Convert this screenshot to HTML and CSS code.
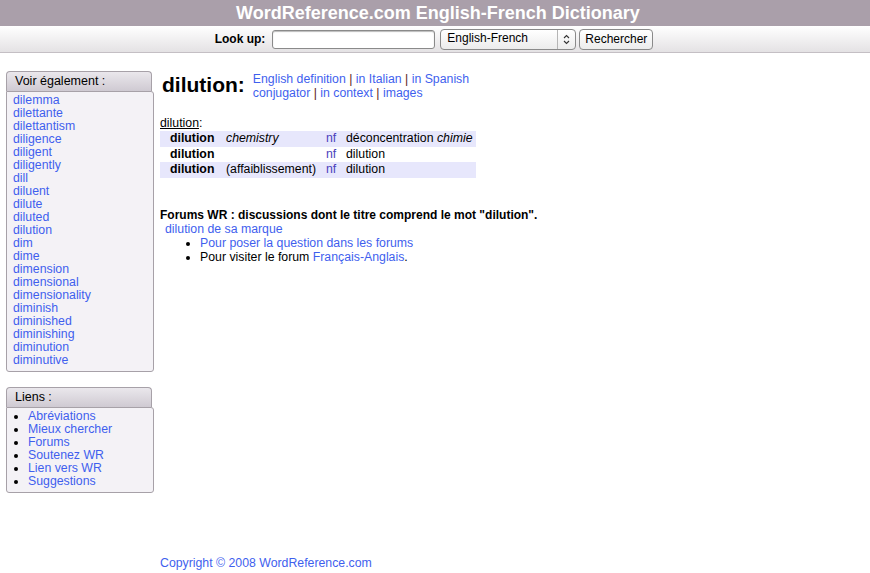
FILE: index.html
```html
<!DOCTYPE html>
<html lang="fr">
<head>
    <meta charset="UTF-8">
    <title>dilution - English-French Dictionary WordReference.com</title>
    <link rel="stylesheet" href="styles.css">
</head>
<body>
    <div class="title-bar">WordReference.com English-French Dictionary</div>

    <form class="search-bar">
        <label for="query">Look up:</label>
        <input type="text" id="query" class="search-input">
        <div class="select-box">
            <span>English-French</span>
            <span class="stepper">
                <svg width="7" height="11" viewBox="0 0 7 11"><path d="M1 4 L3.5 1.5 L6 4 M1 7 L3.5 9.5 L6 7" fill="none" stroke="#333" stroke-width="1.1"/></svg>
            </span>
        </div>
        <button type="button" class="search-button">Rechercher</button>
    </form>

    <div class="page">
        <div class="sidebar">
            <div class="side-box">
                <div class="side-head">Voir également :</div>
                <div class="side-body">
                    <a href="#">dilemma</a>
                    <a href="#">dilettante</a>
                    <a href="#">dilettantism</a>
                    <a href="#">diligence</a>
                    <a href="#">diligent</a>
                    <a href="#">diligently</a>
                    <a href="#">dill</a>
                    <a href="#">diluent</a>
                    <a href="#">dilute</a>
                    <a href="#">diluted</a>
                    <a href="#">dilution</a>
                    <a href="#">dim</a>
                    <a href="#">dime</a>
                    <a href="#">dimension</a>
                    <a href="#">dimensional</a>
                    <a href="#">dimensionality</a>
                    <a href="#">diminish</a>
                    <a href="#">diminished</a>
                    <a href="#">diminishing</a>
                    <a href="#">diminution</a>
                    <a href="#">diminutive</a>
                </div>
            </div>

            <div class="side-box">
                <div class="side-head">Liens :</div>
                <ul class="side-body side-list">
                    <li><a href="#">Abréviations</a></li>
                    <li><a href="#">Mieux chercher</a></li>
                    <li><a href="#">Forums</a></li>
                    <li><a href="#">Soutenez WR</a></li>
                    <li><a href="#">Lien vers WR</a></li>
                    <li><a href="#">Suggestions</a></li>
                </ul>
            </div>
        </div>

        <div class="main">
            <div class="word-head">
                <h1>dilution:</h1>
                <div class="other-links">
                    <a href="#">English definition</a> | <a href="#">in Italian</a> | <a href="#">in Spanish</a><br>
                    <a href="#">conjugator</a> | <a href="#">in context</a> | <a href="#">images</a>
                </div>
            </div>

            <div class="entry-title"><u>dilution</u>:</div>
            <table class="entries">
                <tr class="even">
                    <td class="from">dilution</td>
                    <td class="note"><i>chemistry</i></td>
                    <td class="pos">nf</td>
                    <td>déconcentration <i>chimie</i></td>
                </tr>
                <tr>
                    <td class="from">dilution</td>
                    <td class="note"></td>
                    <td class="pos">nf</td>
                    <td>dilution</td>
                </tr>
                <tr class="even">
                    <td class="from">dilution</td>
                    <td class="note">(affaiblissement)</td>
                    <td class="pos">nf</td>
                    <td>dilution</td>
                </tr>
            </table>

            <div class="forums">
                <b>Forums WR : discussions dont le titre comprend le mot "dilution".</b>
                <div class="thread"><a href="#">dilution de sa marque</a></div>
                <ul>
                    <li><a href="#">Pour poser la question dans les forums</a></li>
                    <li>Pour visiter le forum <a href="#">Français-Anglais</a>.</li>
                </ul>
            </div>
        </div>
    </div>

    <div class="footer"><a href="#">Copyright © 2008 WordReference.com</a></div>
</body>
</html>
```

FILE: styles.css
```css
body {
    margin: 0;
    font-family: "Liberation Sans", Arial, sans-serif;
    font-size: 12.3px;
    color: #000;
}
a {
    color: #3f5fee;
    text-decoration: none;
}
.title-bar {
    height: 26px;
    padding-left: 6px;
    line-height: 26px;
    background-color: #aa9faa;
    color: #fff;
    font-size: 18px;
    font-weight: bold;
    text-align: center;
}
.search-bar {
    display: flex;
    justify-content: center;
    align-items: center;
    height: 26px;
    margin: 0;
    padding-right: 2px;
    background: linear-gradient(#ffffff, #e4e2e4);
    border-bottom: 1px solid #c4bfc4;
    font-size: 12px;
}
.search-bar label {
    font-weight: bold;
    margin-right: 7px;
}
.search-input {
    width: 157px;
    height: 15px;
    margin: 0 5px 0 0;
    padding: 1px 2px;
    border: 1px solid #8a8a8a;
    border-radius: 3px;
    box-shadow: inset 0 1px 1px #bbb;
}
.select-box {
    display: flex;
    align-items: center;
    justify-content: space-between;
    box-sizing: border-box;
    width: 136px;
    height: 21px;
    margin-right: 3px;
    padding-left: 6px;
    border: 1px solid #8a8a8a;
    border-radius: 4px;
    background: linear-gradient(#ffffff, #ececec);
    font-size: 12px;
}
.select-box span {
    margin-top: -3px;
}
.stepper {
    display: flex;
    align-items: center;
    justify-content: center;
    width: 17px;
    height: 19px;
    margin-top: 0 !important;
    border-left: 1px solid #b5b5b5;
}
.search-button {
    height: 21px;
    padding: 0 5px;
    border: 1px solid #8a8a8a;
    border-radius: 4px;
    background: linear-gradient(#ffffff, #ececec);
    font-family: "Liberation Sans", Arial, sans-serif;
    font-size: 12px;
}
.page {
    display: flex;
    padding: 18px 0 0 6px;
}
.sidebar {
    width: 149px;
    flex-shrink: 0;
}
.side-box {
    margin-bottom: 15px;
}
.side-head {
    width: 136px;
    height: 19px;
    line-height: 19px;
    padding-left: 8px;
    border: 1px solid #a7a1a8;
    border-bottom: none;
    border-radius: 4px 4px 0 0;
    background: linear-gradient(#eae7ec, #cfcad2);
    font-size: 12.5px;
}
.side-body {
    width: 140px;
    margin: 0;
    padding: 2px 0 4px 6px;
    border: 1px solid #a7a1a8;
    border-radius: 0 3px 3px 3px;
    background-color: #f4f2f6;
    line-height: 13px;
}
.side-body a {
    display: block;
}
.side-list {
    width: 125px;
    padding-left: 21px;
    padding-bottom: 4px;
}
.main {
    padding-left: 5px;
}
.word-head {
    display: flex;
    align-items: flex-start;
}
.word-head h1 {
    margin: 0 8px 0 2px;
    font-size: 21px;
    line-height: 28px;
}
.other-links {
    padding-top: 1px;
    line-height: 14px;
    color: #5a2222;
}
.entry-title {
    margin-top: 16px;
    line-height: 14px;
}
.entries {
    border-collapse: collapse;
    margin-top: 1px;
}
.entries td {
    height: 15.5px;
    padding: 0 4px 0 4px;
    line-height: 15px;
}
.entries tr.even {
    background-color: #e7e7fc;
}
.entries .from {
    width: 48px;
    padding-left: 10px;
    font-weight: bold;
}
.entries .note {
    width: 92px;
}
.entries .pos {
    width: 12px;
    color: #4a3fbc;
}
.forums {
    margin-top: 30px;
    line-height: 14px;
}
.forums b {
    font-size: 12px;
}
.forums .thread {
    padding-left: 5px;
}
.forums ul {
    margin: 0;
    padding-left: 40px;
}
.footer {
    margin: 48px 0 0 160px;
    line-height: 14px;
}
```
